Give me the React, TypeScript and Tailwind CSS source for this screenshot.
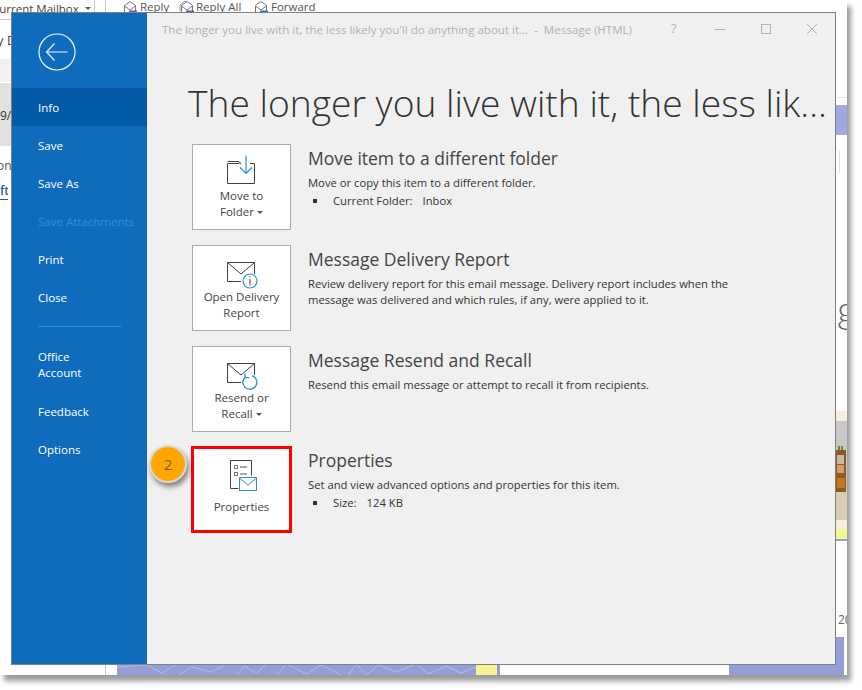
const font = { fontFamily: '"Open Sans", "Noto Sans", sans-serif' };

const navItems = ["Save", "Save As"];

const ReplyIcon = ({ color, double }: { color: string; double?: boolean }) => (
  <svg width="16" height="14" viewBox="0 0 16 14" fill="none" className="shrink-0">
    {double && <path d="M1 11V5l5-4 5 4" stroke="#999" />}
    <path d="M2.5 13V5.5L8 1.5l5.5 4V13z" stroke="#777" fill="#fff" />
    <path d="M2.5 6 8 10l5.5-4" stroke="#777" />
    <path d="M7 12h8" stroke={color} strokeWidth="3" />
  </svg>
);

const Caret = () => (
  <span className="inline-block ml-[3px] mb-[2px] border-x-[3px] border-t-[3px] border-x-transparent border-t-[#555]" />
);

const FolderIcon = () => (
  <svg width="32" height="30" viewBox="0 0 32 30" fill="none">
    <path d="M13.5 8.5H1.5v20h27V8.5H24" stroke="#404040" />
    <path d="M1.5 6.5h11.5l2 2.5" stroke="#404040" />
    <path d="M20 0.5v18M14 12.5l6 6 6-6" stroke="#2b8fd8" strokeWidth="1.2" />
  </svg>
);

const EnvelopeInfoIcon = () => (
  <svg width="32" height="36" viewBox="0 -5 32 36" fill="none">
    <path d="M15 20.5H1.5V1.5h27V13" stroke="#404040" />
    <path d="M1.5 1.5 15 13 28.5 1.5" stroke="#404040" />
    <circle cx="24" cy="20" r="7" fill="#fff" stroke="#2b8fd8" strokeWidth="1.2" />
    <path d="M24 18v6.5M24 15.2v1.3" stroke="#404040" />
  </svg>
);

const EnvelopeResendIcon = () => (
  <svg width="32" height="36" viewBox="0 -5 32 36" fill="none">
    <path d="M15 20.5H1.5V1.5h27V13" stroke="#404040" />
    <path d="M1.5 1.5 15 13 28.5 1.5" stroke="#404040" />
    <path d="M26 13.6a7 7 0 1 1-6.5 1.2" fill="#fff" stroke="#2b8fd8" strokeWidth="1.3" />
    <path d="M19 11.5v4.2h4.2" stroke="#2b8fd8" strokeWidth="1.3" />
  </svg>
);

const PropertiesIcon = () => (
  <svg width="32" height="33" viewBox="0 0 32 33" fill="none">
    <path d="M3.5 29.5V1.5h21v15" stroke="#404040" />
    <path d="M3.5 29.5h8" stroke="#404040" />
    <rect x="7.5" y="6.5" width="3" height="3" stroke="#777" />
    <rect x="7.5" y="13.5" width="3" height="3" stroke="#777" />
    <path d="M13 8h7M13 15h7" stroke="#555" />
    <rect x="12.5" y="18.5" width="17" height="13" fill="#fff" stroke="#2b8fd8" />
    <path d="m12.5 19 8.5 7 8.5-7" stroke="#2b8fd8" />
  </svg>
);

const ActionButton = ({ icon, children }: { icon: React.ReactNode; children: React.ReactNode }) => (
  <div className="w-[99px] h-[86px] shrink-0 bg-white border border-[#ababab] flex flex-col items-center pt-[10px] text-[11.5px] leading-4 text-[#444] text-center">
    <div className="h-[31px] mb-[2px]">{icon}</div>
    {children}
  </div>
);

const Bullet = ({ label, value, gap }: { label: string; value: string; gap: string }) => (
  <div className={`flex items-center mt-[2px] ml-[5px] ${gap}`}>
    <span className="w-[4px] h-[4px] bg-[#333] mr-[16px]" />
    <span>{label}</span>
    <span>{value}</span>
  </div>
);

const Info = ({ title, children }: { title: string; children: React.ReactNode }) => (
  <div className="ml-[17px] text-[11.25px] leading-4 text-[#333]">
    <h2 className="text-[17.5px] leading-[26px] pt-px text-[#444] mb-[4px]">{title}</h2>
    {children}
  </div>
);

// purple wallpaper peeking out under the window
const Cracks = () => (
  <svg className="w-full h-full" preserveAspectRatio="none" viewBox="0 0 360 11" fill="none" stroke="#b5bbe2">
    <path d="M0 3 30 1 45 9 60 0M62 11 75 3 95 8 110 0M120 11 128 2 140 9 150 0M160 11 170 0 190 10 205 1 225 11M232 11 240 0 250 11 262 1 280 8 300 0 312 10 330 2 345 9 360 3" />
  </svg>
);

const App = () => {
  return (
    <div className="w-[862px] h-[690px] bg-white overflow-hidden" style={font}>
      <div className="relative w-[847px] h-[675px] bg-white shadow-[4px_6px_5px_rgba(0,0,0,0.4)] flex">
        {/* mail list behind the dialog */}
        <div className="w-[106px] shrink-0 border-r border-[#c8c8c8] flex flex-col text-[12px] text-[#444]">
          <div className="h-[20px] shrink-0 flex items-start border-b border-[#c8c8c8] overflow-hidden">
            <div className="w-[95px] border-r border-[#c8c8c8] h-full flex overflow-hidden whitespace-nowrap leading-4 text-[11.5px] pt-px">
              <span className="-ml-[8px]">Current Mailbox</span>
              <span className="mt-[6px] ml-[6px] border-x-[3px] border-t-[3px] border-x-transparent border-t-[#555]" />
            </div>
          </div>
          <div className="h-[39px] shrink-0 pt-[12px] text-[13px] leading-4 overflow-hidden">
            <span className="-ml-[3px] block">y D</span>
          </div>
          <div className="h-[24px] shrink-0 bg-[#f2f2f2] border-b border-white" />
          <div className="h-[63px] shrink-0 bg-[#e1e1e1] pt-[25px] leading-4 text-[#333]">
            <span className="block">9/</span>
          </div>
          <div className="pt-[12px] leading-4 -ml-[3px] text-[#555]">on</div>
          <div className="mt-[9px] leading-4 -ml-[3px] w-[11px] pl-[3px] overflow-hidden font-semibold text-[#1f5fa8] border-b border-[#1f5fa8]">ft</div>
        </div>

        {/* reading pane behind the dialog */}
        <div className="w-[730px] shrink-0 flex flex-col justify-between">
          <div className="h-[12px] flex items-start overflow-hidden pl-[16px] text-[11.5px] leading-[14px] text-[#555] whitespace-nowrap">
            <div className="flex gap-[2px] w-[57px]"><ReplyIcon color="#7b4fa8" /><span>Reply</span></div>
            <div className="flex gap-[1px] w-[74px]"><ReplyIcon color="#7b4fa8" double /><span>Reply All</span></div>
            <div className="flex gap-[2px]"><ReplyIcon color="#3f74b8" /><span>Forward</span></div>
          </div>
          <div className="h-[11px] flex pl-[11px]">
            <div className="w-[359px] bg-[#959ed6]"><Cracks /></div>
            <div className="w-[21px] bg-[#f6f594]" />
            <div className="w-[3px] bg-[#959ed6]" />
            <div className="w-[229px] bg-white" />
            <div className="flex-1 bg-[#959ed6]" />
          </div>
        </div>

        {/* right edge of the message body */}
        <div className="flex-1 flex flex-col text-[#666] overflow-hidden">
          <div className="h-[98px] shrink-0 border-b border-[#e4e4e4]" />
          <div className="h-[7px] shrink-0" />
          <div className="h-[30px] shrink-0 bg-[#a0a8de]" />
          <div className="h-[14px] shrink-0" />
          <div className="h-[25px] shrink-0 w-[4px] border-r border-[#ddd] rounded-r-full" />
          <div className="h-[237px] shrink-0 pt-[112px] pl-px text-[38px] font-light leading-[44px] overflow-hidden font-['Lato']">g</div>
          <div className="h-[10px] shrink-0 bg-[#f6eee0]" />
          <svg width="11" height="99" viewBox="0 0 11 99" className="shrink-0">
            <rect width="11" height="99" fill="#c9c8c4" />
            <rect y="70" width="11" height="29" fill="#d8ccb4" />
            <rect y="29" width="10" height="42" fill="#8a5a2b" />
            <rect x="1" y="34" width="7" height="9" fill="#c9b9a0" />
            <rect x="1" y="44" width="7" height="8" fill="#d6a060" />
            <rect x="1" y="57" width="8" height="10" fill="#c87818" />
            <path d="M3 29v-4M6 29v-4" stroke="#7c7c40" strokeWidth="2" />
          </svg>
          <div className="h-[9px] shrink-0 bg-[#f6eee0]" />
          <div className="h-[10px] shrink-0 bg-[#f6f594]" />
          <div className="h-[2px] shrink-0 bg-[#959ed6]" />
          <div className="h-[96px] shrink-0 text-[12px] leading-4 text-[#666] pt-[71px] pl-[2px] whitespace-nowrap overflow-hidden">20</div>
          <div className="w-[8px] flex-1 bg-[#959ed6]" />
        </div>

        {/* backstage dialog */}
        <div className="absolute left-[11px] top-[12px] w-[825px] h-[653px] border border-[#808080] bg-[#f0f0f0] flex">
          <nav className="relative w-[135px] shrink-0 bg-[#0f6cbd] text-white text-[11.5px] leading-4 [&>.item]:pt-[2px]">
            <div className="pt-[20px] pl-[26px] h-[75px]">
              <svg width="38" height="38" viewBox="0 0 38 38" fill="none" stroke="#eef4fb" strokeWidth="1.2">
                <circle cx="19" cy="19" r="18" />
                <path d="M8.5 19h21M16.5 10.5 8.5 19l8 8.5" />
              </svg>
            </div>
            <div className="item h-[38px] bg-[#035aa6] flex items-center pl-[26px]">Info</div>
            {navItems.map((item) => (
              <div key={item} className="item h-[38px] flex items-center pl-[26px]">{item}</div>
            ))}
            <div className="item h-[38px] flex items-center pl-[26px] text-[#3b8ad0]">Save Attachments</div>
            <div className="item h-[38px] flex items-center pl-[26px]">Print</div>
            <div className="item h-[38px] flex items-center pl-[26px]">Close</div>
            <div className="ml-[26px] w-[83px] border-t border-[#3b8ad0] mt-[10px] mb-[22px]" />
            <div className="pl-[26px]">Office<br />Account</div>
            <div className="item h-[38px] flex items-center pl-[26px] mt-[11px]">Feedback</div>
            <div className="item h-[38px] flex items-center pl-[26px]">Options</div>
          </nav>

          <main className="relative flex-1 min-w-0">
            <div className="h-[32px] flex items-center pl-[15px] text-[11.55px] text-[#b2b2b2] whitespace-nowrap">
              <span className="w-[509px] pt-px">The longer you live with it, the less likely you'll do anything about it...&nbsp; -&nbsp; Message (HTML)</span>
              <span className="w-[44px] text-[13px]">?</span>
              <span className="w-[10px] h-px bg-[#b2b2b2]" />
              <span className="w-[10px] h-[10px] border border-[#b2b2b2] ml-[36px]" />
              <svg width="12" height="12" viewBox="0 0 12 12" stroke="#b2b2b2" className="ml-[35px]">
                <path d="m1 1 10 10M11 1 1 11" />
              </svg>
            </div>
            <h1 className="ml-[41px] mt-[33px] h-[66px] text-[37.2px] leading-[50px] font-light text-[#333] whitespace-nowrap">
              The longer you live with it, the less lik…
            </h1>
            <div className="ml-[45px] flex flex-col gap-[15px]">
              <div className="flex">
                <ActionButton icon={<FolderIcon />}>
                  <span>Move to</span>
                  <span>Folder<Caret /></span>
                </ActionButton>
                <Info title="Move item to a different folder">
                  <p>Move or copy this item to a different folder.</p>
                  <Bullet label="Current Folder:" value="Inbox" gap="[&>span:last-child]:ml-[10px]" />
                </Info>
              </div>
              <div className="flex">
                <ActionButton icon={<EnvelopeInfoIcon />}>
                  <span>Open Delivery</span>
                  <span>Report</span>
                </ActionButton>
                <Info title="Message Delivery Report">
                  <p>
                    Review delivery report for this email message. Delivery report includes when the<br />
                    message was delivered and which rules, if any, were applied to it.
                  </p>
                </Info>
              </div>
              <div className="flex">
                <ActionButton icon={<EnvelopeResendIcon />}>
                  <span>Resend or</span>
                  <span>Recall<Caret /></span>
                </ActionButton>
                <Info title="Message Resend and Recall">
                  <p>Resend this email message or attempt to recall it from recipients.</p>
                </Info>
              </div>
              <div className="flex -mt-px">
                <div className="w-[101px] h-[87px] -ml-px mr-[-1px] shrink-0 bg-white border-[3px] border-[#f00] flex flex-col items-center pt-[10px] text-[11.5px] leading-4 text-[#444]">
                  <div className="h-[33px] mb-[7px] pl-[2px]"><PropertiesIcon /></div>
                  <span>Properties</span>
                </div>
                <Info title="Properties">
                  <p>Set and view advanced options and properties for this item.</p>
                  <Bullet label="Size:" value="124 KB" gap="[&>span:last-child]:ml-[10px]" />
                </Info>
              </div>
            </div>
            {/* step badge */}
            <div className="absolute left-[2px] top-[432px] w-[38px] h-[38px] rounded-full bg-[#ffa600] border-2 border-[#d8d8d8] shadow-[2px_4px_5px_rgba(0,0,0,0.45)] flex items-center justify-center text-[15px] text-[#7d6228]">
              2
            </div>
          </main>
        </div>
      </div>
    </div>
  );
};

export default App;
